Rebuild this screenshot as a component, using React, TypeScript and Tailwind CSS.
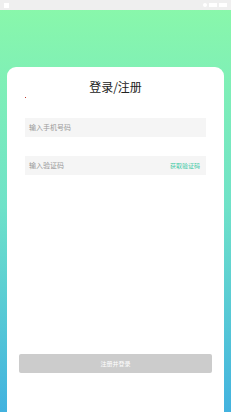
import React from 'react';

export default function App() {
  return (
    <div
      className="w-[231px] h-[412px] overflow-hidden flex flex-col bg-gradient-to-b from-[#8af8a9] via-[#6fe2c8] to-[#42b2df]"
      style={{ fontFamily: '"Noto Sans CJK SC", "Noto Sans", sans-serif' }}
    >
      {/* Status bar */}
      <div className="h-[10px] bg-[#efefef] flex items-center justify-between px-[4px] shrink-0">
        <div className="w-[5px] h-[5px] bg-white" />
        <div className="flex items-center gap-[2px]">
          <div className="w-[4px] h-[4px] bg-white rounded-full" />
          <div className="w-[8px] h-[4px] bg-white" />
          <div className="w-[8px] h-[4px] bg-white" />
        </div>
      </div>

      {/* Card */}
      <div className="mt-[57px] mx-[7px] flex-1 bg-white rounded-t-[9px] flex flex-col">
        <div className="pt-[12px] text-center text-[12px] leading-[16px] text-[#222]">登录/注册</div>
        <div className="ml-[18px] mt-[2px] w-[1px] h-[1px] bg-[#c0392b]" />

        <div className="mx-[18px] mt-[20px] h-[19px] bg-[#f5f5f5] flex items-center px-[4px]">
          <span className="text-[7px] text-[#9a9a9a]">输入手机号码</span>
        </div>

        <div className="mx-[18px] mt-[19px] h-[19px] bg-[#f5f5f5] flex items-center justify-between px-[4px]">
          <span className="text-[7px] text-[#9a9a9a]">输入验证码</span>
          <span className="text-[6px] text-[#42c9a6] mr-[2px]">获取验证码</span>
        </div>

        <div className="mx-[12px] mt-[179px] h-[19px] bg-[#cccccc] rounded-[2px] flex items-center justify-center">
          <span className="text-[6px] text-white">注册并登录</span>
        </div>
      </div>
    </div>
  );
}
